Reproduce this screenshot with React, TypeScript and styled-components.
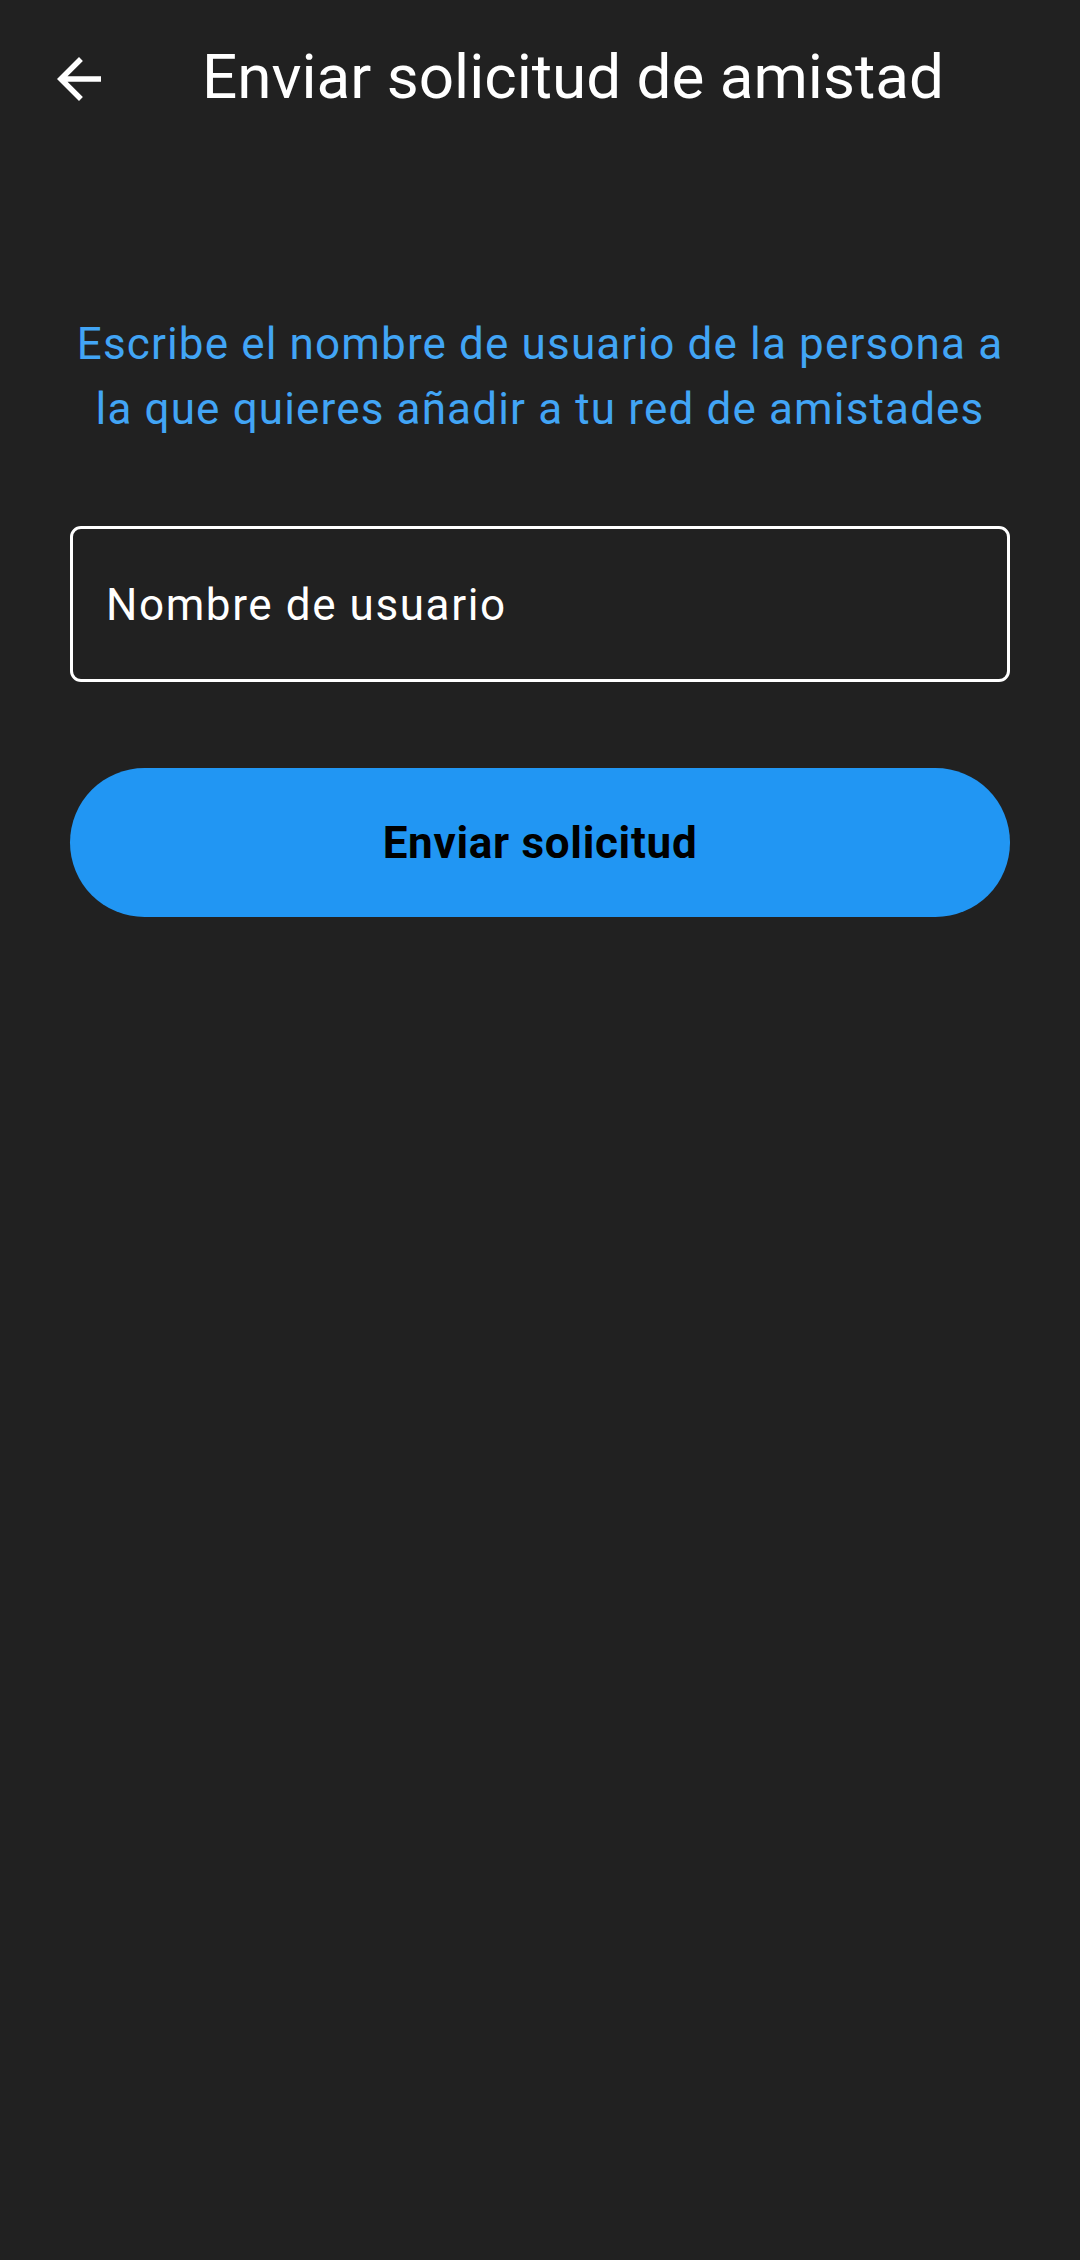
import React, { useState } from 'react';
import styled, { createGlobalStyle } from 'styled-components';

const GlobalStyle = createGlobalStyle`
  html, body {
    margin: 0;
    padding: 0;
    background: #212121;
  }
  body {
    font-family: Roboto, 'Noto Sans', 'Liberation Sans', sans-serif;
  }
`;

const App = (): JSX.Element => {
  const [username, setUsername] = useState('');

  return (
    <>
      <GlobalStyle />
      <Screen>
        <Header>
          <BackButton aria-label="Volver">
            <svg width="66" height="66" viewBox="0 0 24 24" fill="#ffffff">
              <path d="M20 11H7.83l5.59-5.59L12 4l-8 8 8 8 1.41-1.41L7.83 13H20v-2z" />
            </svg>
          </BackButton>
          <Title>Enviar solicitud de amistad</Title>
        </Header>
        <Body>
          <Hint>
            Escribe el nombre de usuario de la persona a la que quieres añadir a
            tu red de amistades
          </Hint>
          <Field>
            <Input
              placeholder="Nombre de usuario"
              value={username}
              onChange={(e) => setUsername(e.target.value)}
            />
          </Field>
          <SendButton>Enviar solicitud</SendButton>
        </Body>
      </Screen>
    </>
  );
};

const Screen = styled.div`
  width: 1080px;
  min-height: 2260px;
  background: #212121;
  display: flex;
  flex-direction: column;
`;

const Header = styled.header`
  height: 158px;
  display: flex;
  align-items: center;
`;

const BackButton = styled.button`
  width: 158px;
  height: 158px;
  display: flex;
  align-items: center;
  justify-content: center;
  background: transparent;
  border: none;
  padding: 0;
  cursor: pointer;
`;

const Title = styled.h1`
  margin: 0 0 6px 44px;
  font-size: 62px;
  font-weight: 400;
  color: #ffffff;
  white-space: nowrap;
`;

const Body = styled.main`
  display: flex;
  flex-direction: column;
  padding: 154px 70px 0;
`;

const Hint = styled.p`
  margin: 0 -10px;
  font-size: 44px;
  line-height: 65px;
  letter-spacing: 1.15px;
  color: #42a5f5;
  text-align: center;
`;

const Field = styled.div`
  margin-top: 84px;
  height: 156px;
  box-sizing: border-box;
  border: 3px solid #ffffff;
  border-radius: 11px;
  display: flex;
  align-items: center;
  padding: 0 33px;
`;

const Input = styled.input`
  flex: 1;
  background: transparent;
  border: none;
  outline: none;
  font-family: inherit;
  font-size: 44px;
  letter-spacing: 1.6px;
  color: #ffffff;
  padding: 0;
  margin-top: 2px;
  &::placeholder {
    color: #ffffff;
    opacity: 1;
  }
`;

const SendButton = styled.button`
  margin-top: 86px;
  height: 149px;
  border: none;
  border-radius: 75px;
  background: #2196f3;
  color: #000000;
  font-family: inherit;
  font-size: 44px;
  font-weight: 700;
  letter-spacing: 0.7px;
  cursor: pointer;
`;

export default App;
